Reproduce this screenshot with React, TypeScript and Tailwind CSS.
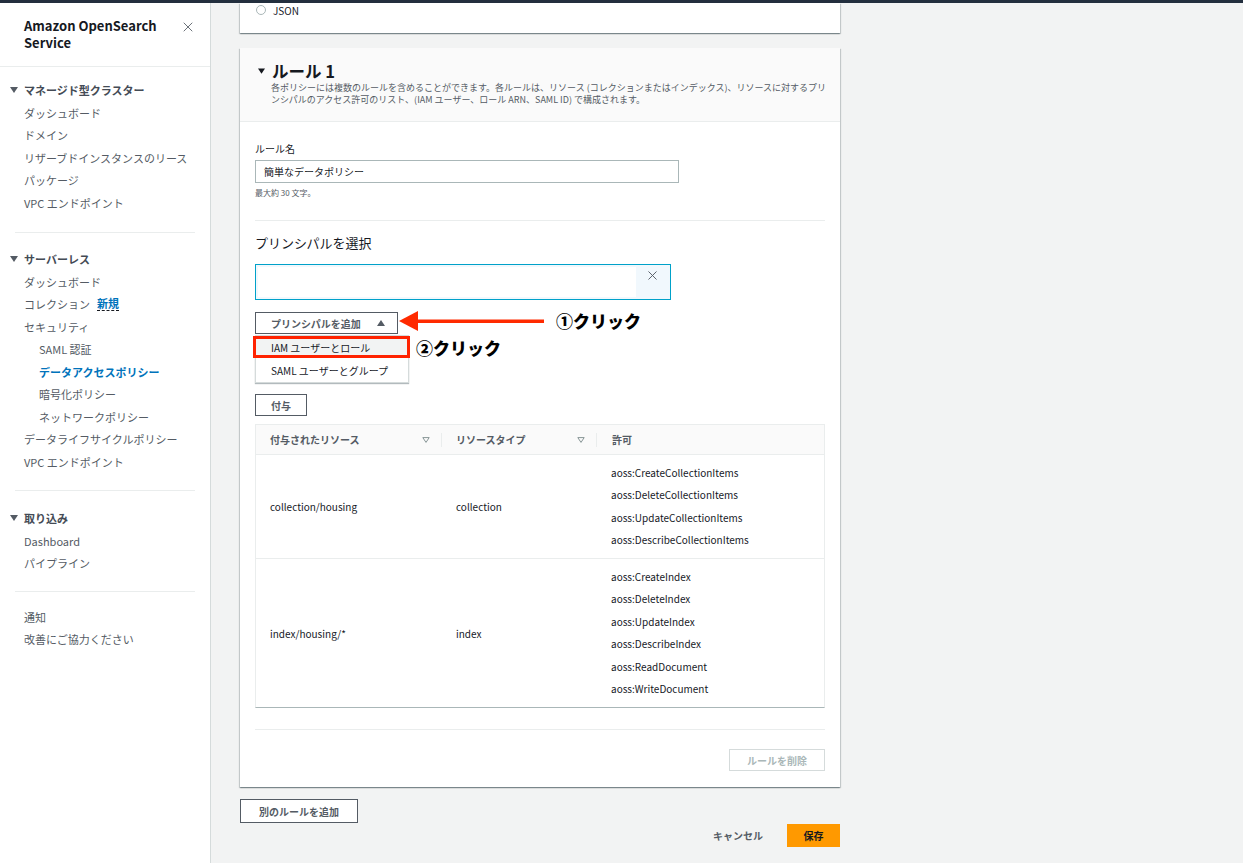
import { X } from 'lucide-react';

const font = "font-['Noto_Sans_CJK_JP','Noto_Sans',sans-serif]";

const NavHead = ({ label }: { label: string }) => (
  <div className="flex h-[22.5px] items-center gap-[6px] pl-[10px] text-[11px] font-bold text-[#444b55]">
    <svg width="8" height="6" viewBox="0 0 8 6"><path d="M0 0h8L4 6z" fill="#545b64" /></svg>
    <span>{label}</span>
  </div>
);

const NavItem = ({ label, sub, active, children }: { label: string; sub?: boolean; active?: boolean; children?: React.ReactNode }) => (
  <div
    className={`flex h-[22.5px] items-center text-[11px] ${sub ? 'pl-[39px]' : 'pl-[24px]'} ${
      active ? 'font-bold text-[#0073bb]' : 'text-[#545b64]'
    }`}
  >
    {label}
    {children}
  </div>
);

const Sidebar = () => (
  <aside className="w-[211px] shrink-0 border-r border-[#d5dbdb] bg-white">
    <div className="flex h-[63px] items-start justify-between pl-[24px] pr-[14px] pt-[14px]">
      <div className="text-[13px] font-bold leading-[17px] text-[#16191f]">
        <div>Amazon OpenSearch</div>
        <div>Service</div>
      </div>
      <X className="mt-[2px] h-[16px] w-[16px] text-[#545b64]" strokeWidth={1.3} />
    </div>
    <div className="border-t border-[#eaeded] pb-[18px] pt-[12px]">
      <NavHead label="マネージド型クラスター" />
      <NavItem label="ダッシュボード" />
      <NavItem label="ドメイン" />
      <NavItem label="リザーブドインスタンスのリース" />
      <NavItem label="パッケージ" />
      <NavItem label="VPC エンドポイント" />
    </div>
    <div className="mx-[15px] border-t border-[#eaeded]" />
    <div className="pb-[17px] pt-[15px]">
      <NavHead label="サーバーレス" />
      <NavItem label="ダッシュボード" />
      <NavItem label="コレクション">
        <span className="ml-[7px] border-b border-dashed border-[#16191f] font-bold leading-[13px] text-[#0073bb]">新規</span>
      </NavItem>
      <NavItem label="セキュリティ" />
      <NavItem label="SAML 認証" sub />
      <NavItem label="データアクセスポリシー" sub active />
      <NavItem label="暗号化ポリシー" sub />
      <NavItem label="ネットワークポリシー" sub />
      <NavItem label="データライフサイクルポリシー" />
      <NavItem label="VPC エンドポイント" />
    </div>
    <div className="mx-[15px] border-t border-[#eaeded]" />
    <div className="pb-[16px] pt-[16px]">
      <NavHead label="取り込み" />
      <NavItem label="Dashboard" />
      <NavItem label="パイプライン" />
    </div>
    <div className="mx-[15px] border-t border-[#eaeded]" />
    <div className="pt-[14px]">
      <NavItem label="通知" />
      <NavItem label="改善にご協力ください" />
    </div>
  </aside>
);

const SortIcon = () => (
  <svg width="8" height="6" viewBox="0 0 8 6" className="shrink-0">
    <path d="M0.8 0.6h6.4L4 5.4z" fill="none" stroke="#879596" strokeWidth="1" />
  </svg>
);

const rows = [
  {
    res: 'collection/housing',
    type: 'collection',
    perms: [
      'aoss:CreateCollectionItems',
      'aoss:DeleteCollectionItems',
      'aoss:UpdateCollectionItems',
      'aoss:DescribeCollectionItems',
    ],
  },
  {
    res: 'index/housing/*',
    type: 'index',
    perms: [
      'aoss:CreateIndex',
      'aoss:DeleteIndex',
      'aoss:UpdateIndex',
      'aoss:DescribeIndex',
      'aoss:ReadDocument',
      'aoss:WriteDocument',
    ],
  },
];

const card = 'bg-white shadow-[0_1px_1px_0_rgba(0,28,36,0.3),1px_1px_1px_0_rgba(0,28,36,0.15),-1px_1px_1px_0_rgba(0,28,36,0.15)]';
const btn = 'flex items-center border border-[#545b64] bg-white text-[10px] font-bold text-[#545b64]';

const ResourceTable = () => (
  <div className="mt-[8px] border border-[#eaeded] border-b-[#aab7b8] bg-white">
    <div className="flex h-[30px] items-center border-b border-[#eaeded] bg-[#fafafa] text-[10px] font-bold text-[#545b64]">
      <div className="flex w-[185px] items-center justify-between pl-[14px] pr-[11px]">
        <span>付与されたリソース</span>
        <SortIcon />
      </div>
      <div className="h-[14px] w-px bg-[#eaeded]" />
      <div className="flex w-[154px] items-center justify-between pl-[14px] pr-[11px]">
        <span>リソースタイプ</span>
        <SortIcon />
      </div>
      <div className="h-[14px] w-px bg-[#eaeded]" />
      <div className="pl-[15px]">許可</div>
    </div>
    {rows.map((r, i) => (
      <div key={r.res} className={`flex items-center text-[10px] text-[#16191f] ${i > 0 ? 'border-t border-[#eaeded]' : ''}`}>
        <div className="w-[185px] pl-[14px]">{r.res}</div>
        <div className="w-[155px] pl-[15px]">{r.type}</div>
        <div className="py-[6.5px] pl-[15px]">
          {r.perms.map(p => (
            <div key={p} className="leading-[22.5px]">{p}</div>
          ))}
        </div>
      </div>
    ))}
  </div>
);

const PrincipalPicker = () => (
  <div className="relative mt-[12px]">
    <div className={`${btn} h-[22px] w-[143px] justify-between pl-[15px] pr-[12px]`}>
      <span>プリンシパルを追加</span>
      <svg width="8" height="6" viewBox="0 0 8 6"><path d="M0 6h8L4 0z" fill="#545b64" /></svg>
    </div>
    <div className="mt-[1px] w-[154px] border border-[#d5dbdb] bg-white py-px text-[10px] text-[#16191f] shadow-[0_1px_1px_0_rgba(0,28,36,0.3)]">
      <div className="flex h-[21px] items-center bg-[#f2f3f3] pl-[15px]">IAM ユーザーとロール</div>
      <div className="mt-[1px] flex h-[22px] items-center pl-[15px]">SAML ユーザーとグループ</div>
    </div>

    {/* annotations */}
    <div className="absolute left-[-2px] top-[24px] h-[22px] w-[157px] border-[3px] border-[#ff2200]" />
    <svg className="absolute left-[144px] top-[-1px]" width="146" height="20" viewBox="0 0 146 20">
      <path d="M0 10L19 0v20z" fill="#ff2a00" />
      <rect x="17" y="8.5" width="128" height="3.5" fill="#ff2a00" />
    </svg>
    <div className="absolute left-[301px] top-[-3px] text-[17px] font-black leading-[24px] text-black">①クリック</div>
    <div className="absolute left-[161px] top-[24px] text-[17px] font-black leading-[24px] text-black">②クリック</div>
  </div>
);

export default function App() {
  return (
    <div className={`${font} flex min-h-[863px] flex-col bg-[#f2f3f3]`}>
      <div className="h-[3px] bg-[#232f3e]" />
      <div className="flex flex-1">
        <Sidebar />
        <main className="w-[600px] pl-[29px] box-content">
          <div className={`${card} flex h-[30px] items-start gap-[7px] pl-[16px] pt-[2px]`}>
            <span className="h-[10px] w-[10px] rounded-full border border-[#aab7b8]" />
            <span className="text-[10px] leading-[11px] text-[#16191f]">JSON</span>
          </div>

          <section className={`${card} mt-[15px]`}>
            <header className="border-b border-[#eaeded] bg-[#fafafa] pb-[15px] pl-[18px] pr-[8px] pt-[13px]">
              <div className="flex items-center gap-[7px] text-[16.5px] font-bold leading-[20px] text-[#16191f]">
                <svg width="7" height="6" viewBox="0 0 8 6"><path d="M0 0h8L4 6z" fill="#16191f" /></svg>
                ルール 1
              </div>
              <p className="mt-px pl-[13px] text-[9px] leading-[12px] text-[#545b64]">
                各ポリシーには複数のルールを含めることができます。各ルールは、リソース (コレクションまたはインデックス)、リソースに対するプリンシパルのアクセス許可のリスト、(IAM ユーザー、ロール ARN、SAML ID) で構成されます。
              </p>
            </header>

            <div className="px-[15px] pb-[16px] pt-[20px]">
              <div className="text-[10px] leading-[14px] text-[#16191f]">ルール名</div>
              <div className="mt-[4px] flex h-[23px] w-[424px] items-center border border-[#aab7b8] px-[8px] text-[10px] text-[#16191f]">
                簡単なデータポリシー
              </div>
              <div className="mt-[4px] text-[8px] leading-[12px] text-[#545b64]">最大約 30 文字。</div>

              <div className="mt-[21px] border-t border-[#eaeded]" />

              <div className="mt-[13px] text-[13px] leading-[18px] text-[#16191f]">プリンシパルを選択</div>
              <div className="mt-[12px] flex h-[36px] w-[416px] border border-[#00a1c9] bg-[#f1f8fd] p-[2px]">
                <div className="flex-1 bg-white" />
                <div className="flex w-[32px] items-start justify-center pt-[1px]">
                  <X className="h-[15px] w-[15px] text-[#545b64]" strokeWidth={1.5} />
                </div>
              </div>

              <PrincipalPicker />

              <div className={`${btn} mt-[11px] h-[22px] w-[52px] justify-center`}>付与</div>

              <ResourceTable />

              <div className="mt-[21px] border-t border-[#eaeded]" />
              <div className="mt-[19px] flex justify-end">
                <div className="flex h-[22px] w-[96px] items-center justify-center border border-[#d5dbdb] bg-white text-[10px] font-bold text-[#aab7b8]">
                  ルールを削除
                </div>
              </div>
            </div>
          </section>

          <div className={`${btn} mt-[12px] h-[24px] w-[118px] justify-center`}>別のルールを追加</div>

          <div className="mt-px flex items-center justify-end gap-[24px]">
            <span className="text-[10px] font-bold text-[#545b64]">キャンセル</span>
            <div className="flex h-[23px] w-[53px] items-center justify-center bg-[#ff9900] text-[10px] font-bold text-[#16191f]">
              保存
            </div>
          </div>
        </main>
      </div>
    </div>
  );
}
